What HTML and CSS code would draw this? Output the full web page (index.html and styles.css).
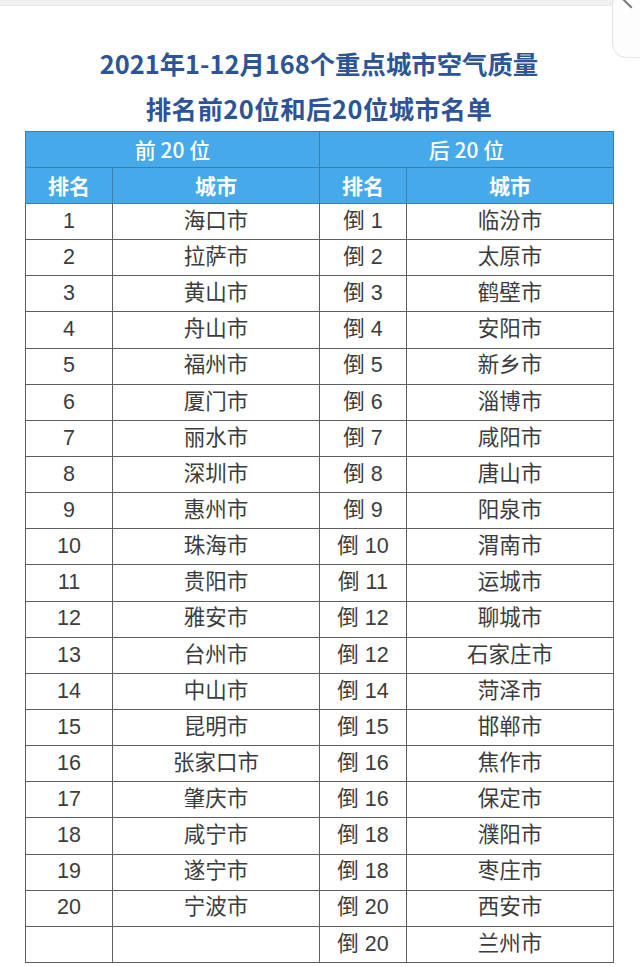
FILE: index.html
```html
<!DOCTYPE html>
<html lang="zh-CN">
<head>
<meta charset="utf-8">
<title>2021年1-12月168个重点城市空气质量排名</title>
<link rel="stylesheet" href="styles.css">
</head>
<body>
<div class="topbar"></div>
<div class="corner"><span class="corner-line"></span></div>
<div class="page">
  <h1 class="title">
    <span class="t1">2021年1-12月168个重点城市空气质量</span>
    <span class="t2">排名前20位和后20位城市名单</span>
  </h1>
  <table class="rank">
    <colgroup>
      <col class="c-rank"><col class="c-city"><col class="c-rank"><col class="c-city2">
    </colgroup>
    <thead>
      <tr class="h1"><th colspan="2">前 20 位</th><th colspan="2">后 20 位</th></tr>
      <tr class="h2"><th>排名</th><th>城市</th><th>排名</th><th>城市</th></tr>
    </thead>
    <tbody>
      <tr><td>1</td><td>海口市</td><td>倒 1</td><td>临汾市</td></tr>
      <tr><td>2</td><td>拉萨市</td><td>倒 2</td><td>太原市</td></tr>
      <tr><td>3</td><td>黄山市</td><td>倒 3</td><td>鹤壁市</td></tr>
      <tr><td>4</td><td>舟山市</td><td>倒 4</td><td>安阳市</td></tr>
      <tr><td>5</td><td>福州市</td><td>倒 5</td><td>新乡市</td></tr>
      <tr><td>6</td><td>厦门市</td><td>倒 6</td><td>淄博市</td></tr>
      <tr><td>7</td><td>丽水市</td><td>倒 7</td><td>咸阳市</td></tr>
      <tr><td>8</td><td>深圳市</td><td>倒 8</td><td>唐山市</td></tr>
      <tr><td>9</td><td>惠州市</td><td>倒 9</td><td>阳泉市</td></tr>
      <tr><td>10</td><td>珠海市</td><td>倒 10</td><td>渭南市</td></tr>
      <tr><td>11</td><td>贵阳市</td><td>倒 11</td><td>运城市</td></tr>
      <tr><td>12</td><td>雅安市</td><td>倒 12</td><td>聊城市</td></tr>
      <tr><td>13</td><td>台州市</td><td>倒 12</td><td>石家庄市</td></tr>
      <tr><td>14</td><td>中山市</td><td>倒 14</td><td>菏泽市</td></tr>
      <tr><td>15</td><td>昆明市</td><td>倒 15</td><td>邯郸市</td></tr>
      <tr><td>16</td><td>张家口市</td><td>倒 16</td><td>焦作市</td></tr>
      <tr><td>17</td><td>肇庆市</td><td>倒 16</td><td>保定市</td></tr>
      <tr><td>18</td><td>咸宁市</td><td>倒 18</td><td>濮阳市</td></tr>
      <tr><td>19</td><td>遂宁市</td><td>倒 18</td><td>枣庄市</td></tr>
      <tr><td>20</td><td>宁波市</td><td>倒 20</td><td>西安市</td></tr>
      <tr><td></td><td></td><td>倒 20</td><td>兰州市</td></tr>
    </tbody>
  </table>
</div>
</body>
</html>
```
FILE: styles.css
```css
html, body {
  margin: 0;
  padding: 0;
  background: #ffffff;
}
body {
  width: 640px;
  height: 967px;
  overflow: hidden;
  position: relative;
  font-family: "Liberation Sans", "Noto Sans CJK SC", sans-serif;
}
.topbar {
  height: 5px;
  background: #f1f1f1;
  border-bottom: 1px solid #e9e9e9;
}
.corner {
  position: absolute;
  top: -10px;
  right: -20px;
  width: 46px;
  height: 66px;
  border: 1px solid #e2e2e2;
  border-radius: 14px;
  background: #fdfdfd;
  overflow: hidden;
}
.corner-line {
  position: absolute;
  left: 9px;
  top: 6px;
  width: 14px;
  height: 1.5px;
  background: #777;
  transform: rotate(45deg);
  transform-origin: left center;
}
.page {
  padding: 0 27px 0 25px;
}
.title {
  margin: 35px 0 0;
  font-family: "Noto Sans CJK SC", sans-serif;
  font-weight: 700;
  font-size: 25.4px;
  color: #2d5595;
  text-align: center;
}
.title span {
  display: block;
  line-height: 45px;
}
.t1 {
  letter-spacing: 0;
}
.t2 {
  letter-spacing: 0.5px;
}
.rank {
  width: 588px;
  border-collapse: collapse;
  table-layout: fixed;
}
.c-rank { width: 87px; }
.c-city { width: 207px; }
.c-city2 { width: 207px; }
.rank th, .rank td {
  height: 35px;
  padding: 0;
  text-align: center;
  vertical-align: middle;
  line-height: 1;
}
.rank th {
  background: #45a9ea;
  color: #ffffff;
  border: 1px solid #3d7eab;
  font-family: "Noto Sans CJK SC", sans-serif;
  font-size: 21px;
}
.h1 th {
  font-weight: 500;
}
.h2 th {
  font-weight: 700;
}
.rank td {
  border: 1px solid #5e5e5e;
  color: #3c3c3c;
  font-size: 21.5px;
  font-weight: 400;
  height: 35.15px;
}
```
